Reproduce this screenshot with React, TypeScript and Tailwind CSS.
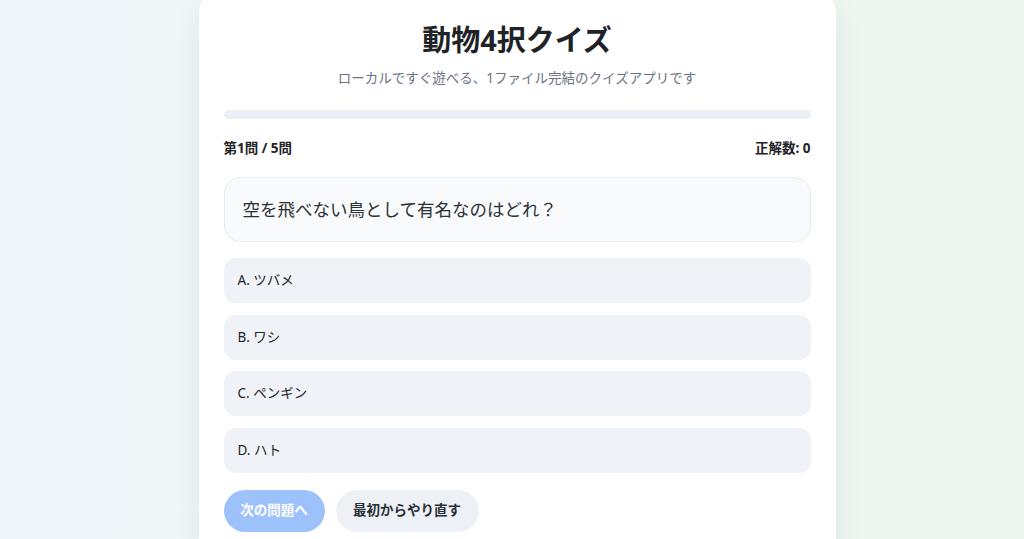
import React from 'react';

const choices = ['ツバメ', 'ワシ', 'ペンギン', 'ハト'];
const labels = ['A', 'B', 'C', 'D'];

export default function App() {
  return (
    <div
      className="min-h-screen h-[539px] overflow-hidden bg-gradient-to-r from-[#f0f7fb] to-[#edf7f0] flex justify-center pl-[10px]"
      style={{ fontFamily: '"Noto Sans", "Noto Sans CJK JP", sans-serif' }}
    >
      <div className="w-[637px] -mt-[6px] bg-white rounded-[18px] shadow-[0_10px_30px_rgba(15,23,42,0.08)] px-[25px] pt-[26px] pb-8 self-start">
        {/* Header */}
        <h1 className="text-center text-[29px] leading-[40px] font-bold text-[#1f2328]">
          動物4択クイズ
        </h1>
        <p className="mt-[8px] text-center text-[13.5px] leading-5 text-[#6b7280]">
          ローカルですぐ遊べる、1ファイル完結のクイズアプリです
        </p>

        {/* Progress */}
        <div className="mt-[22px] h-[9px] rounded-full bg-[#ebf0f7]" />

        <div className="mt-[19px] flex justify-between text-[13.5px] leading-5 font-bold text-[#1f2328]">
          <span>第1問 / 5問</span>
          <span>正解数: 0</span>
        </div>

        {/* Question */}
        <div className="mt-[19px] h-[65px] flex items-center rounded-[16px] border border-[#e8ecf2] bg-[#f8fafc] px-[18px] text-[17.5px] text-[#2b2f36]">
          空を飛べない鳥として有名なのはどれ？
        </div>

        {/* Choices */}
        <div className="mt-[16px] flex flex-col gap-[11.5px]">
          {choices.map((c, i) => (
            <button
              key={c}
              className="h-[45px] w-full flex items-center rounded-[12px] bg-[#eff3f8] px-[14px] text-left text-[13.5px] text-[#1f2328]"
            >
              {labels[i]}. {c}
            </button>
          ))}
        </div>

        {/* Actions */}
        <div className="mt-[17px] flex gap-[11px]">
          <button className="h-[42px] w-[101px] rounded-full bg-[#9dc2fb] text-[13.5px] font-bold text-white">
            次の問題へ
          </button>
          <button className="h-[42px] w-[143px] rounded-full bg-[#edf1f6] text-[13.5px] font-bold text-[#2b2f36]">
            最初からやり直す
          </button>
        </div>
      </div>
    </div>
  );
}
